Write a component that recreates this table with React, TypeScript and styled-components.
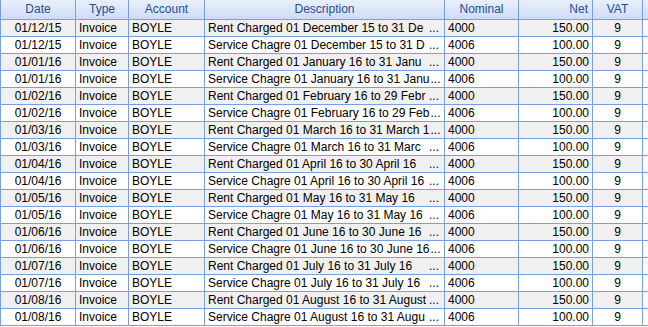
import React from "react";
import styled, { createGlobalStyle } from "styled-components";

const GlobalStyle = createGlobalStyle`
  html, body { margin: 0; padding: 0; background: #fff; }
  body { font-family: "Liberation Sans", Arial, sans-serif; font-size: 12px; }
`;

// border lines sit at x = 76, 129, 205, 445, 519, 593, 643
const COLS = "75px 53px 76px 240px 74px 74px 50px 1fr";
const LINE = "#7a9ee2";

interface Txn {
  date: string;
  desc: string;
  nominal: string;
  net: string;
}

const rows: Txn[] = [
  { date: "01/12/15", desc: "Rent Charged 01 December 15 to 31 De", nominal: "4000", net: "150.00" },
  { date: "01/12/15", desc: "Service Chagre 01 December 15 to 31 D", nominal: "4006", net: "100.00" },
  { date: "01/01/16", desc: "Rent Charged 01 January 16 to 31 Janu", nominal: "4000", net: "150.00" },
  { date: "01/01/16", desc: "Service Chagre 01 January 16 to 31 Janu", nominal: "4006", net: "100.00" },
  { date: "01/02/16", desc: "Rent Charged 01 February 16 to 29 Febr", nominal: "4000", net: "150.00" },
  { date: "01/02/16", desc: "Service Chagre 01 February 16 to 29 Feb", nominal: "4006", net: "100.00" },
  { date: "01/03/16", desc: "Rent Charged 01 March 16 to 31 March 1", nominal: "4000", net: "150.00" },
  { date: "01/03/16", desc: "Service Chagre 01 March 16 to 31 Marc", nominal: "4006", net: "100.00" },
  { date: "01/04/16", desc: "Rent Charged 01 April 16 to 30 April 16", nominal: "4000", net: "150.00" },
  { date: "01/04/16", desc: "Service Chagre 01 April 16 to 30 April 16", nominal: "4006", net: "100.00" },
  { date: "01/05/16", desc: "Rent Charged 01 May 16 to 31 May 16", nominal: "4000", net: "150.00" },
  { date: "01/05/16", desc: "Service Chagre 01 May 16 to 31 May 16", nominal: "4006", net: "100.00" },
  { date: "01/06/16", desc: "Rent Charged 01 June 16 to 30 June 16", nominal: "4000", net: "150.00" },
  { date: "01/06/16", desc: "Service Chagre 01 June 16 to 30 June 16", nominal: "4006", net: "100.00" },
  { date: "01/07/16", desc: "Rent Charged 01 July 16 to 31 July 16", nominal: "4000", net: "150.00" },
  { date: "01/07/16", desc: "Service Chagre 01 July 16 to 31 July 16", nominal: "4006", net: "100.00" },
  { date: "01/08/16", desc: "Rent Charged 01 August 16 to 31 August", nominal: "4000", net: "150.00" },
  { date: "01/08/16", desc: "Service Chagre 01 August 16 to 31 Augu", nominal: "4006", net: "100.00" },
];

const Grid = styled.div`
  display: grid;
  grid-template-columns: ${COLS};
  width: 648px;
  border-left: 1px solid ${LINE};
  box-sizing: border-box;
`;

const Head = styled.div<{ $align?: string; $filler?: boolean }>`
  height: 19px;
  line-height: 19px;
  padding: 0 4px;
  text-align: ${(p) => p.$align || "center"};
  color: #2a4b9b;
  background: linear-gradient(#e8f0fc, #cddcf5);
  border-right: ${(p) => (p.$filler ? "none" : `1px solid ${LINE}`)};
  border-bottom: 1px solid ${LINE};
  white-space: nowrap;
  overflow: hidden;
`;

const Cell = styled.div<{ $align?: string; $odd: boolean; $filler?: boolean }>`
  height: 16px;
  line-height: 16px;
  padding: 0 3px;
  text-align: ${(p) => p.$align || "left"};
  color: #000;
  background: ${(p) => (p.$filler ? "#fff" : p.$odd ? "#f0f0f0" : "#fff")};
  border-right: ${(p) => (p.$filler ? "none" : `1px solid ${LINE}`)};
  border-bottom: 1px solid ${LINE};
  white-space: pre;
  overflow: hidden;
`;

const DescCell = styled(Cell)`
  display: flex;
  justify-content: space-between;
  gap: 1px;
  padding-right: 5px;
`;

const Dots = styled.span`
  flex-shrink: 0;
`;

export default function App() {
  return (
    <>
      <GlobalStyle />
      <Grid>
        <Head>Date</Head>
        <Head>Type</Head>
        <Head>Account</Head>
        <Head>Description</Head>
        <Head>Nominal</Head>
        <Head $align="right">Net</Head>
        <Head>VAT</Head>
        <Head $filler />
        {rows.map((r, i) => {
          const odd = i % 2 === 0;
          return (
            <React.Fragment key={i}>
              <Cell $odd={odd} $align="center">{r.date}</Cell>
              <Cell $odd={odd}>Invoice</Cell>
              <Cell $odd={odd}>BOYLE</Cell>
              <DescCell $odd={odd}>
                <span>{r.desc}</span>
                <Dots>...</Dots>
              </DescCell>
              <Cell $odd={odd}>{r.nominal}</Cell>
              <Cell $odd={odd} $align="right">{r.net}</Cell>
              <Cell $odd={odd} $align="center">9</Cell>
              <Cell $odd={odd} $filler />
            </React.Fragment>
          );
        })}
      </Grid>
    </>
  );
}
